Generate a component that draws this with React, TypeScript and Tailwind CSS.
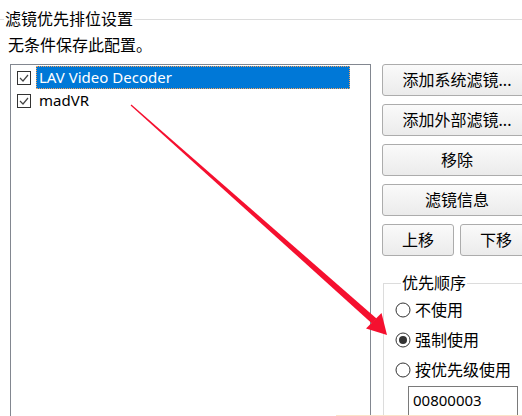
import React from "react";

function CheckBox() {
  return (
    <svg width="14" height="14" viewBox="0 0 14 14" className="shrink-0">
      <rect x="0.5" y="0.5" width="13" height="13" fill="white" stroke="#333333" />
      <polyline points="3,7 6,10 11,4" fill="none" stroke="#444444" strokeWidth="1.2" />
    </svg>
  );
}

function Radio({ checked }: { checked?: boolean }) {
  return (
    <svg width="16" height="16" viewBox="0 0 16 16" className="shrink-0">
      <circle cx="8" cy="8" r="7" fill="white" stroke="#333333" />
      {checked && <circle cx="8" cy="8" r="4" fill="#333333" />}
    </svg>
  );
}

function Btn({ children, className = "" }: { children: React.ReactNode; className?: string }) {
  return (
    <div
      className={`h-[32px] flex items-center justify-center border border-[#acacac] rounded-[3px] bg-gradient-to-b from-[#fafafa] to-[#ebebeb] text-[16px] leading-[22px] ${className}`}
    >
      {children}
    </div>
  );
}

export default function App() {
  const rows = [
    { name: "LAV Video Decoder", selected: true },
    { name: "madVR", selected: false },
  ];

  return (
    <div className="relative w-[522px] h-[416px] overflow-hidden bg-white text-black font-['Noto_Sans','Noto_Sans_CJK_SC',sans-serif]">
      {/* group title */}
      <div className="flex items-center h-[22px] mt-[8px]">
        <div className="w-[4px] h-px bg-[#dcdcdc]" />
        <span className="text-[16px] leading-[22px] px-px">滤镜优先排位设置</span>
        <div className="flex-1 h-px bg-[#dcdcdc]" />
      </div>
      <p className="ml-[8px] mt-[4px] text-[16px] leading-[22px]">无条件保存此配置。</p>

      <div className="flex mt-[8px]">
        {/* filter list */}
        <div className="ml-[10px] w-[361px] h-[360px] shrink-0 border border-[#828790] pt-[1px]">
          {rows.map((r) => (
            <div key={r.name} className="flex items-center h-[23px]">
              <div className="w-[25px] pl-[6px] flex items-center">
                <CheckBox />
              </div>
              <span
                className={`w-[314px] h-[23px] pl-[2px] text-[15px] leading-[21px] ${
                  r.selected ? "bg-[#0078d7] text-white border border-dotted border-[#f7a35c]" : "border border-transparent"
                }`}
              >
                {r.name}
              </span>
            </div>
          ))}
        </div>

        {/* buttons */}
        <div className="ml-[11px] w-[150px] shrink-0 flex flex-col gap-[8px]">
          <Btn>添加系统滤镜...</Btn>
          <Btn>添加外部滤镜...</Btn>
          <Btn>移除</Btn>
          <Btn>滤镜信息</Btn>
          <div className="flex gap-[6px]">
            <Btn className="w-[72px]">上移</Btn>
            <Btn className="w-[72px]">下移</Btn>
          </div>

          <fieldset className="mt-[8px] ml-[1px] border-t border-l border-[#dcdcdc] pl-[11px] h-[200px]">
            <legend className="ml-[6px] px-[1px] text-[16px] leading-[22px]">优先顺序</legend>
            <div className="flex flex-col gap-[8px] mt-[5px]">
              <label className="flex items-center gap-[4px] h-[22px] text-[16px] leading-[22px]">
                <Radio />
                不使用
              </label>
              <label className="flex items-center gap-[4px] h-[22px] text-[16px] leading-[22px]">
                <Radio checked />
                强制使用
              </label>
              <label className="flex items-center gap-[4px] h-[22px] text-[16px] leading-[22px]">
                <Radio />
                按优先级使用
              </label>
            </div>
            <div className="mt-[5px] ml-[13px] w-[110px] h-[32px] border border-[#7a7a7a] px-[4px] text-[15px] leading-[26px]">
              00800003
            </div>
          </fieldset>
        </div>
      </div>

      {/* red annotation arrow */}
      <svg className="absolute left-0 top-0 pointer-events-none" width="522" height="416" viewBox="0 0 522 416">
        <polygon points="131.4,104.6 130.6,105.4 372,323.5 376.5,318.5" fill="#f5102f" />
        <polygon points="387,335 366,328.5 381.5,313" fill="#f5102f" />
      </svg>

      <div className="absolute bottom-0 left-[336px] right-0 h-px bg-[#fbe3c9]" />
    </div>
  );
}
